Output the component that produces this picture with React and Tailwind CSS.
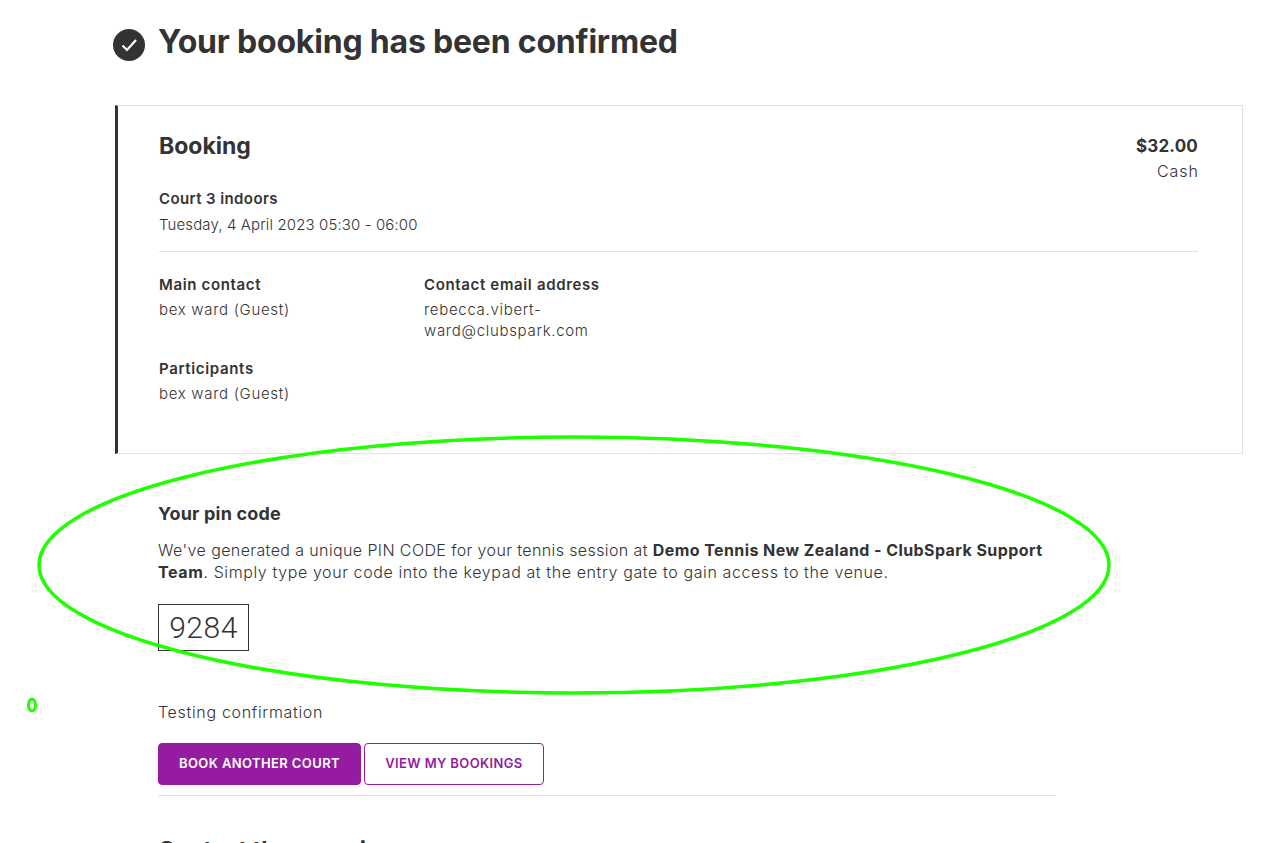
import React from 'react';

const font = { fontFamily: 'Inter, "Noto Sans", sans-serif' };

const Field = ({ label, children, className = '' }) => (
  <div className={className}>
    <div className="text-[15px] leading-[20px] font-semibold tracking-[0.65px]">{label}</div>
    <div className="mt-[4px] text-[15px] leading-[21px] font-light tracking-[0.69px]">{children}</div>
  </div>
);

const App = () => {
  return (
    <div className="relative h-[843px] w-[1263px] overflow-hidden bg-white text-[#333333]" style={font}>
      <div className="ml-[115px] w-[1128px]">
        <div className="flex h-[105px] items-start">
          <svg className="ml-[-2px] mt-[29px] h-[32px] w-[32px] shrink-0" viewBox="0 0 32 32">
            <circle cx="16" cy="16" r="16" fill="#333333" />
            <path d="M9.5 16.5l4.5 4.5 9-10" fill="none" stroke="#ffffff" strokeWidth="2.2" />
          </svg>
          <h1 className="ml-[13px] mt-[22px] text-[32px] leading-[40px] font-bold tracking-[-0.2px] whitespace-nowrap">
            Your booking has been confirmed
          </h1>
        </div>

        <div className="h-[349px] border border-l-[3px] border-[#e2e2e2] border-l-[#333333] pl-[41px] pr-[44px] pt-[25px]">
          <div className="flex justify-between">
            <h2 className="text-[23px] leading-[30px] font-bold">Booking</h2>
            <div className="text-right">
              <div className="mt-[3px] text-[17px] leading-[24px] font-bold tracking-[0.2px]">$32.00</div>
              <div className="mt-[2px] mr-[-1px] text-[16px] leading-[22px] font-light tracking-[1px]">Cash</div>
            </div>
          </div>
          <div className="mt-[7px] pb-[16px] border-b border-[#e2e2e2]">
            <div className="text-[15px] leading-[20px] font-semibold tracking-[0.4px]">Court 3 indoors</div>
            <div className="mt-[6px] text-[15px] leading-[20px] font-light tracking-[0.12px]">Tuesday, 4 April 2023 05:30 - 06:00</div>
          </div>
          <div className="mt-[23px] flex">
            <Field label="Main contact" className="w-[265px]">bex ward (Guest)</Field>
            <Field label="Contact email address" className="w-[190px]">
              rebecca.vibert-
              <br />
              ward@clubspark.com
            </Field>
          </div>
          <Field label="Participants" className="mt-[18px]">bex ward (Guest)</Field>
        </div>
      </div>

      <div className="ml-[158px] w-[898px]">
        <h3 className="mt-[48px] text-[18px] leading-[24px] font-bold tracking-[0.2px]">Your pin code</h3>
        <p className="mt-[13px] text-[16px] leading-[22px] font-light tracking-[0.39px] whitespace-nowrap">
          We've generated a unique PIN CODE for your tennis session at <strong className="font-bold tracking-[0.42px]">Demo Tennis New Zealand - ClubSpark Support</strong>
          <br />
          <span className="tracking-[0.6px]"><strong className="font-bold">Team</strong>. Simply type your code into the keypad at the entry gate to gain access to the venue.</span>
        </p>
        <div className="mt-[21px] flex h-[47px] w-[91px] items-center justify-center border border-[#333333] font-['Roboto'] text-[30px] font-light tracking-[0.5px]">
          9284
        </div>
        <p className="mt-[50px] text-[16px] leading-[22px] font-light tracking-[0.67px]">Testing confirmation</p>
        <div className="mt-[20px] flex gap-[3px]">
          <button className="h-[42px] w-[203px] rounded-[4px] border border-[#951ca0] bg-[#951ca0] text-[13px] font-semibold tracking-[0.39px] text-white">
            BOOK ANOTHER COURT
          </button>
          <button className="h-[42px] w-[180px] rounded-[4px] border border-[#951ca0] bg-white text-[13px] font-semibold tracking-[0.38px] text-[#951ca0]">
            VIEW MY BOOKINGS
          </button>
        </div>
        <div className="mt-[10px] border-t border-[#e2e2e2]" />
        <h2 className="mt-[39px] text-[23px] leading-[30px] font-bold whitespace-nowrap">Contact the organiser</h2>
      </div>

      {/* hand drawn annotation over the pin code */}
      <svg className="absolute left-0 top-0 pointer-events-none" width="1263" height="843">
        <ellipse cx="574" cy="565" rx="535" ry="128" fill="none" stroke="#1fff00" strokeWidth="3.5" />
        <ellipse cx="32" cy="705" rx="3.5" ry="6" fill="none" stroke="#1fff00" strokeWidth="3" />
      </svg>
    </div>
  );
};

export default App;
